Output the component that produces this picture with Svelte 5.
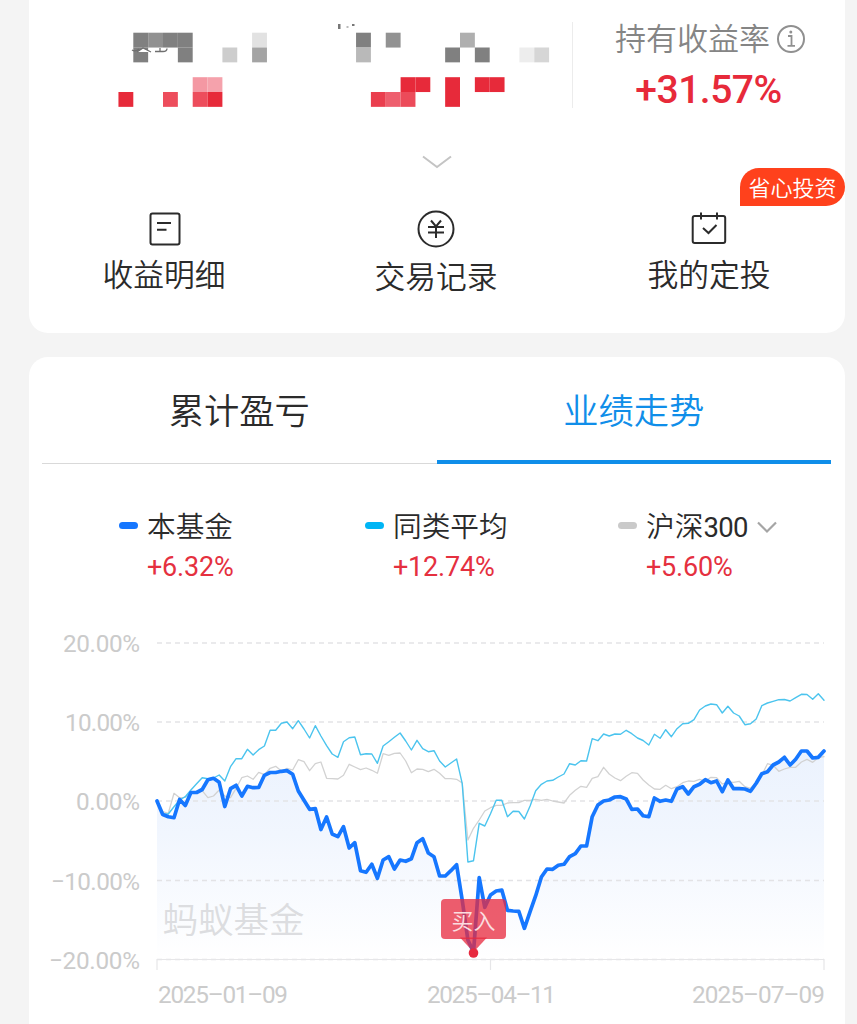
<script>
	const actions = [
		{ name: "收益明细", icon: "list" },
		{ name: "交易记录", icon: "yuan" },
		{ name: "我的定投", icon: "calendar", tag: "省心投资" },
	];

	const tabs = ["累计盈亏", "业绩走势"];
	let activeTab = 1;

	const legend = [
		{ name: "本基金", value: "+6.32%", kind: "fund" },
		{ name: "同类平均", value: "+12.74%", kind: "average" },
		{ name: "沪深", code: "300", value: "+5.60%", kind: "index", more: true },
	];

	// masked amounts: column, row, colour
	const cell = 14.85;
	const rows = [32.7, 47.5, 77.2, 92];
	const mask = [
		[0, 0, "#808080"], [1, 0, "#919191"], [2, 0, "#808080"], [3, 0, "#808080"],
		[0, 1, "#808080"], [3, 1, "#808080"], [6, 1, "#cdcdcd"], [8, 0, "#e2e2e2"], [8, 1, "#a4a4a4"],
		[4, 2, "#f498a3"], [5, 2, "#f5a2ac"], [-1, 3, "#e72a3a"], [2, 3, "#ed4d5c"], [4, 3, "#ed4d5c"], [5, 3, "#e72a3a"],
		[15, 0, "#808080"], [17, 0, "#929292"], [15, 1, "#b9b9b9"], [22, 0, "#afafaf"],
		[21, 1, "#808080"], [23, 1, "#808080"], [26, 1, "#ededed"], [27, 1, "#d6d6d6"],
		[18, 2, "#e72a3a"], [19, 2, "#e72a3a"], [21, 2, "#e72a3a"], [21, 3, "#e72a3a"],
		[23, 2, "#e72a3a"], [24, 2, "#e72a3a"], [16, 3, "#ea3e4e"], [17, 3, "#ee5f6e"], [18, 3, "#ec4b5a"],
	];

	const grid = [
		{ y: 643, label: "20.00%", width: 77 },
		{ y: 722, label: "10.00%", width: 75 },
		{ y: 801, label: "0.00%", width: 64 },
		{ y: 880.5, label: "−10.00%", width: 89 },
		{ y: 959.5, label: "−20.00%", width: 91 },
	];

	const fund = [
		801, 814.5, 816.7, 817.7, 799.5, 805.5, 792.5, 792.5, 789.5, 779.7, 778.3, 782.3, 806.5, 788.7, 785.3,
		796, 786.3, 787.7, 787.5, 775.3, 772.5, 772.5, 771.3, 770.6, 774.3, 791, 800.3, 809.3, 808.5, 829.5,
		817, 834, 836.7, 826.7, 848, 842.7, 870.7, 872.3, 864.3, 878.3, 860, 856.7, 869, 860, 861.3,
		858.7, 842.7, 838.7, 853, 856.7, 876, 876, 870.7, 864.7, 900, 940, 952, 877.7, 907.3, 895,
		891, 890, 910.3, 911, 911.3, 928.3, 911.7, 895.7, 877, 869, 869.3, 865.3, 864.3, 856.7, 853.7,
		846, 846, 816.7, 805, 801, 800, 797, 796.7, 799, 809.3, 809, 815.7, 816.7, 798, 801.3,
		800, 801.3, 789, 786.7, 794, 786.7, 784.3, 779.7, 782.7, 781, 791.7, 780, 788.7, 788.7, 789,
		791.3, 783.3, 773.7, 771.7, 765, 762, 757.3, 765, 759.3, 751, 751, 758, 757.3, 751,
	];
	const average = [
		801, 814, 814, 806.7, 800, 796.7, 790, 783.7, 777.7, 778.7, 778, 775, 781, 766.7, 758.7,
		758.7, 749.3, 755, 749.7, 746, 730.3, 730.3, 723.3, 722, 728.7, 720.7, 729, 738, 725.7, 736,
		745.7, 754, 757.3, 741.7, 737.7, 737, 754.7, 753.7, 754, 763.3, 746, 741.7, 737.3, 733, 741,
		750, 740.3, 748.7, 751.7, 750.7, 761, 767, 763, 759, 783.3, 862, 860.7, 823.3, 826, 813.7,
		800.3, 800.3, 816.7, 811.3, 811.5, 819, 806, 790.7, 784.3, 781, 780.3, 777, 774, 763.7, 765,
		760.7, 761, 738.7, 740.7, 734, 736, 734, 734.3, 730.3, 733.7, 738, 740.5, 745, 734.3, 738.3,
		729.7, 736.7, 728.7, 723.7, 723.3, 719.7, 710, 706, 704, 704.7, 713, 706.3, 713, 716, 724.7,
		723.7, 719, 705.7, 703, 701.3, 699.7, 699.5, 701, 697.7, 694.3, 694.5, 699.3, 693.7, 700.3,
	];
	const index = [
		801, 811.7, 813.3, 793.3, 797.7, 797.3, 793.3, 792, 790.7, 797.7, 796, 790, 796, 797.7, 788.3,
		777.7, 776, 779.3, 772.3, 774.7, 768.3, 766.3, 771, 768.3, 770, 759.7, 761.7, 770.7, 763.7, 762,
		778.3, 778.7, 779, 775.3, 764.3, 767, 769.7, 768, 770.3, 773.3, 753.7, 755.3, 753.3, 753, 761,
		772.7, 769, 769.3, 771.7, 769.3, 773.3, 778.7, 778.7, 779.3, 783, 840, 828.3, 820, 811, 807.7,
		805.3, 805.3, 803, 802.7, 802.7, 800.3, 800.3, 799.3, 800.3, 799.3, 801, 802, 803, 795.3, 790.3,
		786.3, 787.3, 778.3, 776.7, 767.3, 774, 778, 780.7, 776.3, 772.7, 773.3, 780, 785, 789, 789.3,
		785.3, 788.7, 786.7, 782.7, 781, 781.3, 779.3, 781, 777.3, 777.7, 784, 782, 782.3, 781.3, 786.7,
		788.3, 782.7, 775, 763.7, 765.3, 771.3, 769, 767.3, 767.3, 762, 759.3, 762.3, 757.7, 756.7,
	];

	const left = 157;
	const right = 824;
	const bottom = 959.5;

	function toPoints(values) {
		const step = (right - left) / (values.length - 1);
		return values.map((y, i) => `${(left + i * step).toFixed(1)},${y}`).join(" ");
	}
</script>

<main>
	<section class="card overview">
		<div class="summary">
			<svg class="mask" width="543" height="130" viewBox="29 0 543 130">
				{#each mask as [col, row, fill]}
					<rect x={133.3 + col * cell} y={rows[row]} width={cell} height={cell} {fill} />
				{/each}
				<path fill="#fff" d="M137 52l6-4 8 4z" />
				<path fill="none" stroke="#6f6f6f" stroke-width="1.3" d="M132 50q3 2 7-1M137 52l6-4 8 4M155 51.500h8q4 0 4-3M160 48v3" />
				<path fill="#777" d="M338 24h2.500v5H338zM346.500 26.500h2v1h-2zM352 24h2.500v2H352z" />
			</svg>
			<div class="rate">
				<div class="rate-name">
					<span>持有收益率</span>
					<svg width="30" height="30" viewBox="0 0 30 30" fill="none" stroke="#909090">
						<circle cx="15" cy="15" r="13" stroke-width="2" />
						<path stroke-width="1.8" d="M12 12h3.500v9.500M11.500 21.800h7.500" />
						<circle cx="14.800" cy="8" r="1.500" fill="#909090" stroke="none" />
					</svg>
				</div>
				<strong>+31.57%</strong>
			</div>
		</div>

		<svg class="expand" width="30" height="14" viewBox="0 0 30 14">
			<path d="M1 1.500l14 10.500 14-10.500" fill="none" stroke="#c4c4c4" stroke-width="2" />
		</svg>

		<div class="actions">
			{#each actions as action}
				<div class="action {action.icon}">
					<svg width="40" height="40" viewBox="0 0 40 40" fill="none" stroke="#2b2b2b" stroke-width="2">
						{#if action.icon === "list"}
							<rect x="6.500" y="4.500" width="29" height="31" rx="2" />
							<path d="M13 14h14M13 20.800h9.500" />
						{:else if action.icon === "yuan"}
							<circle cx="20" cy="20" r="17.500" />
							<path d="M15 11.500l5 6 5-6M12 18h16M12 23.500h16M20 18v11" />
						{:else}
							<rect x="3.700" y="7" width="32.500" height="27" rx="2" />
							<path d="M12 3.500v7M28 3.500v7M14 19l5.500 5 8-8" />
						{/if}
					</svg>
					<span>{action.name}</span>
					{#if action.tag}
						<em>{action.tag}</em>
					{/if}
				</div>
			{/each}
		</div>
	</section>

	<section class="card performance">
		<nav>
			{#each tabs as tab, i}
				<button class:active={activeTab === i} on:click={() => (activeTab = i)}>{tab}</button>
			{/each}
		</nav>

		<div class="legend">
			{#each legend as item}
				<div class="item {item.kind}">
					<i></i>
					<div>
						<p class="name">
							<span>{item.name}{#if item.code}<b>{item.code}</b>{/if}</span>
							{#if item.more}
								<svg width="20" height="13" viewBox="0 0 20 13">
									<path d="M1 1.500l9 9 9-9" fill="none" stroke="#a5a5a5" stroke-width="2.200" />
								</svg>
							{/if}
						</p>
						<p class="value">{item.value}</p>
					</div>
				</div>
			{/each}
		</div>

		<svg class="chart" width="816" height="414" viewBox="29 610 816 414">
			<defs>
				<linearGradient id="area" gradientUnits="userSpaceOnUse" x1="0" y1="750" x2="0" y2="960">
					<stop offset="0" stop-color="#1668ee" stop-opacity="0.085" />
					<stop offset="0.4" stop-color="#1668ee" stop-opacity="0.06" />
					<stop offset="1" stop-color="#1668ee" stop-opacity="0" />
				</linearGradient>
			</defs>

			<polygon points="{left},{bottom} {toPoints(fund)} {right},{bottom}" fill="url(#area)" />
			{#each grid as line}
				<line class="grid" x1={left} x2={right} y1={line.y} y2={line.y} />
				<text class="axis" x={140 - line.width} y={line.y + 9} textLength={line.width}>{line.label}</text>
			{/each}
			<path class="ticks" d="M157 970v-10.500H824V970M490.500 959.500V970" />
			<text class="watermark" x="162.500" y="933">蚂蚁基金</text>

			<polyline class="line index" points={toPoints(index)} />
			<polyline class="line average" points={toPoints(average)} />
			<polyline class="line fund" points={toPoints(fund)} />

			<rect x="441" y="899" width="65" height="40" rx="4" fill="#e72a3f" opacity="0.76" />
			<path d="M460 937.500h27l-12 13h-3z" fill="#e72a3f" opacity="0.76" />
			<circle cx="473.500" cy="953" r="4.800" fill="#e72a3f" />
			<text class="buy" x="473.500" y="929" text-anchor="middle">买入</text>

			<text class="axis" x="158" y="1003" textLength="130">2025–01–09</text>
			<text class="axis" x="427" y="1003" textLength="129">2025–04–11</text>
			<text class="axis" x="692" y="1003" textLength="133">2025–07–09</text>
		</svg>
	</section>
</main>

<style>
	:global(body) {
		background: #f4f4f4;
		overflow: hidden;
	}

	main {
		width: 857px;
		height: 1024px;
		box-sizing: border-box;
		padding: 0 12px 0 29px;
		overflow: hidden;
		font-family: "Noto Sans CJK SC", sans-serif;
		font-weight: 350;
		color: #2b2b2b;
	}

	svg {
		display: block;
		flex: none;
	}

	p {
		margin: 0;
	}

	.card {
		background: #fff;
	}

	.overview {
		height: 333px;
		border-radius: 0 0 19px 19px;
	}

	.summary {
		display: flex;
		height: 155px;
	}

	.rate {
		width: 271px;
		height: 86px;
		margin-top: 22px;
		border-left: 1px solid #ececec;
		text-align: center;
	}

	.rate-name {
		display: flex;
		align-items: center;
		gap: 6px;
		height: 34px;
		padding-left: 42px;
		font-size: 31px;
		line-height: 30px;
		color: #858585;
	}

	.rate-name span {
		height: 34px;
	}

	.rate strong {
		display: block;
		margin-top: 11px;
		font-family: Roboto, sans-serif;
		font-size: 39px;
		line-height: 46px;
		font-weight: 500;
		letter-spacing: -0.500px;
		color: #e72a3a;
	}

	.expand {
		margin: 0 auto;
	}

	.actions {
		display: grid;
		grid-template-columns: repeat(3, 1fr);
		margin-top: 40px;
	}

	.action {
		position: relative;
		display: flex;
		flex-direction: column;
		align-items: center;
		font-size: 30.800px;
		line-height: 40px;
	}

	.list,
	.yuan {
		padding-right: 2px;
	}

	.action span {
		margin-top: 4px;
	}

	.yuan span {
		margin-top: 6px;
	}

	.action em {
		position: absolute;
		top: -41px;
		right: 0;
		width: 105px;
		height: 38px;
		border-radius: 19px 19px 19px 0;
		background: #ff411c;
		color: #fff;
		font-size: 22px;
		line-height: 37px;
		font-style: normal;
		text-align: center;
	}

	.performance {
		margin-top: 24px;
		height: 667px;
		border-radius: 19px 19px 0 0;
	}

	nav {
		display: flex;
		height: 107px;
		margin: 0 14px 0 13px;
		box-shadow: inset 0 -1px #d9d9d9;
	}

	button {
		flex: 1;
		padding: 0;
		border: 0;
		border-bottom: 4px solid transparent;
		background: none;
		font: inherit;
		font-size: 35.300px;
		color: inherit;
	}

	button.active {
		border-color: #108ee9;
		color: #108ee9;
	}

	.legend {
		display: grid;
		grid-template-columns: 246px 253px 1fr;
		height: 146px;
		padding-left: 90px;
		box-sizing: border-box;
		padding-top: 43px;
	}

	.item {
		display: flex;
		gap: 9px;
	}

	.item i {
		width: 19px;
		height: 7px;
		margin-top: 15px;
		border-radius: 3.500px;
		background: #1677ff;
	}

	.average i {
		background: #00b5f5;
	}

	.index i {
		background: #cacaca;
	}

	.name {
		display: flex;
		align-items: center;
		gap: 9px;
		height: 40px;
		font-size: 28.700px;
		line-height: 36px;
	}

	.name b {
		font-family: Roboto, sans-serif;
		font-weight: 400;
		font-size: 27.500px;
		line-height: 1;
		letter-spacing: -0.700px;
	}

	.name span {
		height: 40px;
	}

	.value {
		font-family: Roboto, sans-serif;
		font-weight: 400;
		font-size: 27px;
		line-height: 40px;
		color: #e5303f;
		letter-spacing: -0.200px;
	}

	.grid {
		stroke: #e3e3e6;
		stroke-width: 1.300;
		stroke-dasharray: 5 4;
	}

	.axis {
		font-family: Roboto, sans-serif;
		font-weight: 400;
		font-size: 24.300px;
		fill: #cbcbcb;
	}

	.ticks {
		fill: none;
		stroke: #e6e6e8;
		stroke-width: 1.200;
	}

	.watermark {
		font-size: 35.500px;
		fill: #dcdde0;
	}

	.line {
		fill: none;
		stroke-linejoin: round;
		stroke-linecap: round;
	}

	.line.index {
		stroke: #d2d2d2;
		stroke-width: 1.300;
	}

	.line.average {
		stroke: #4bc4ee;
		stroke-width: 1.400;
	}

	.line.fund {
		stroke: #1677ff;
		stroke-width: 3.700;
	}

	.buy {
		font-size: 22px;
		fill: #fbdde0;
	}
</style>
